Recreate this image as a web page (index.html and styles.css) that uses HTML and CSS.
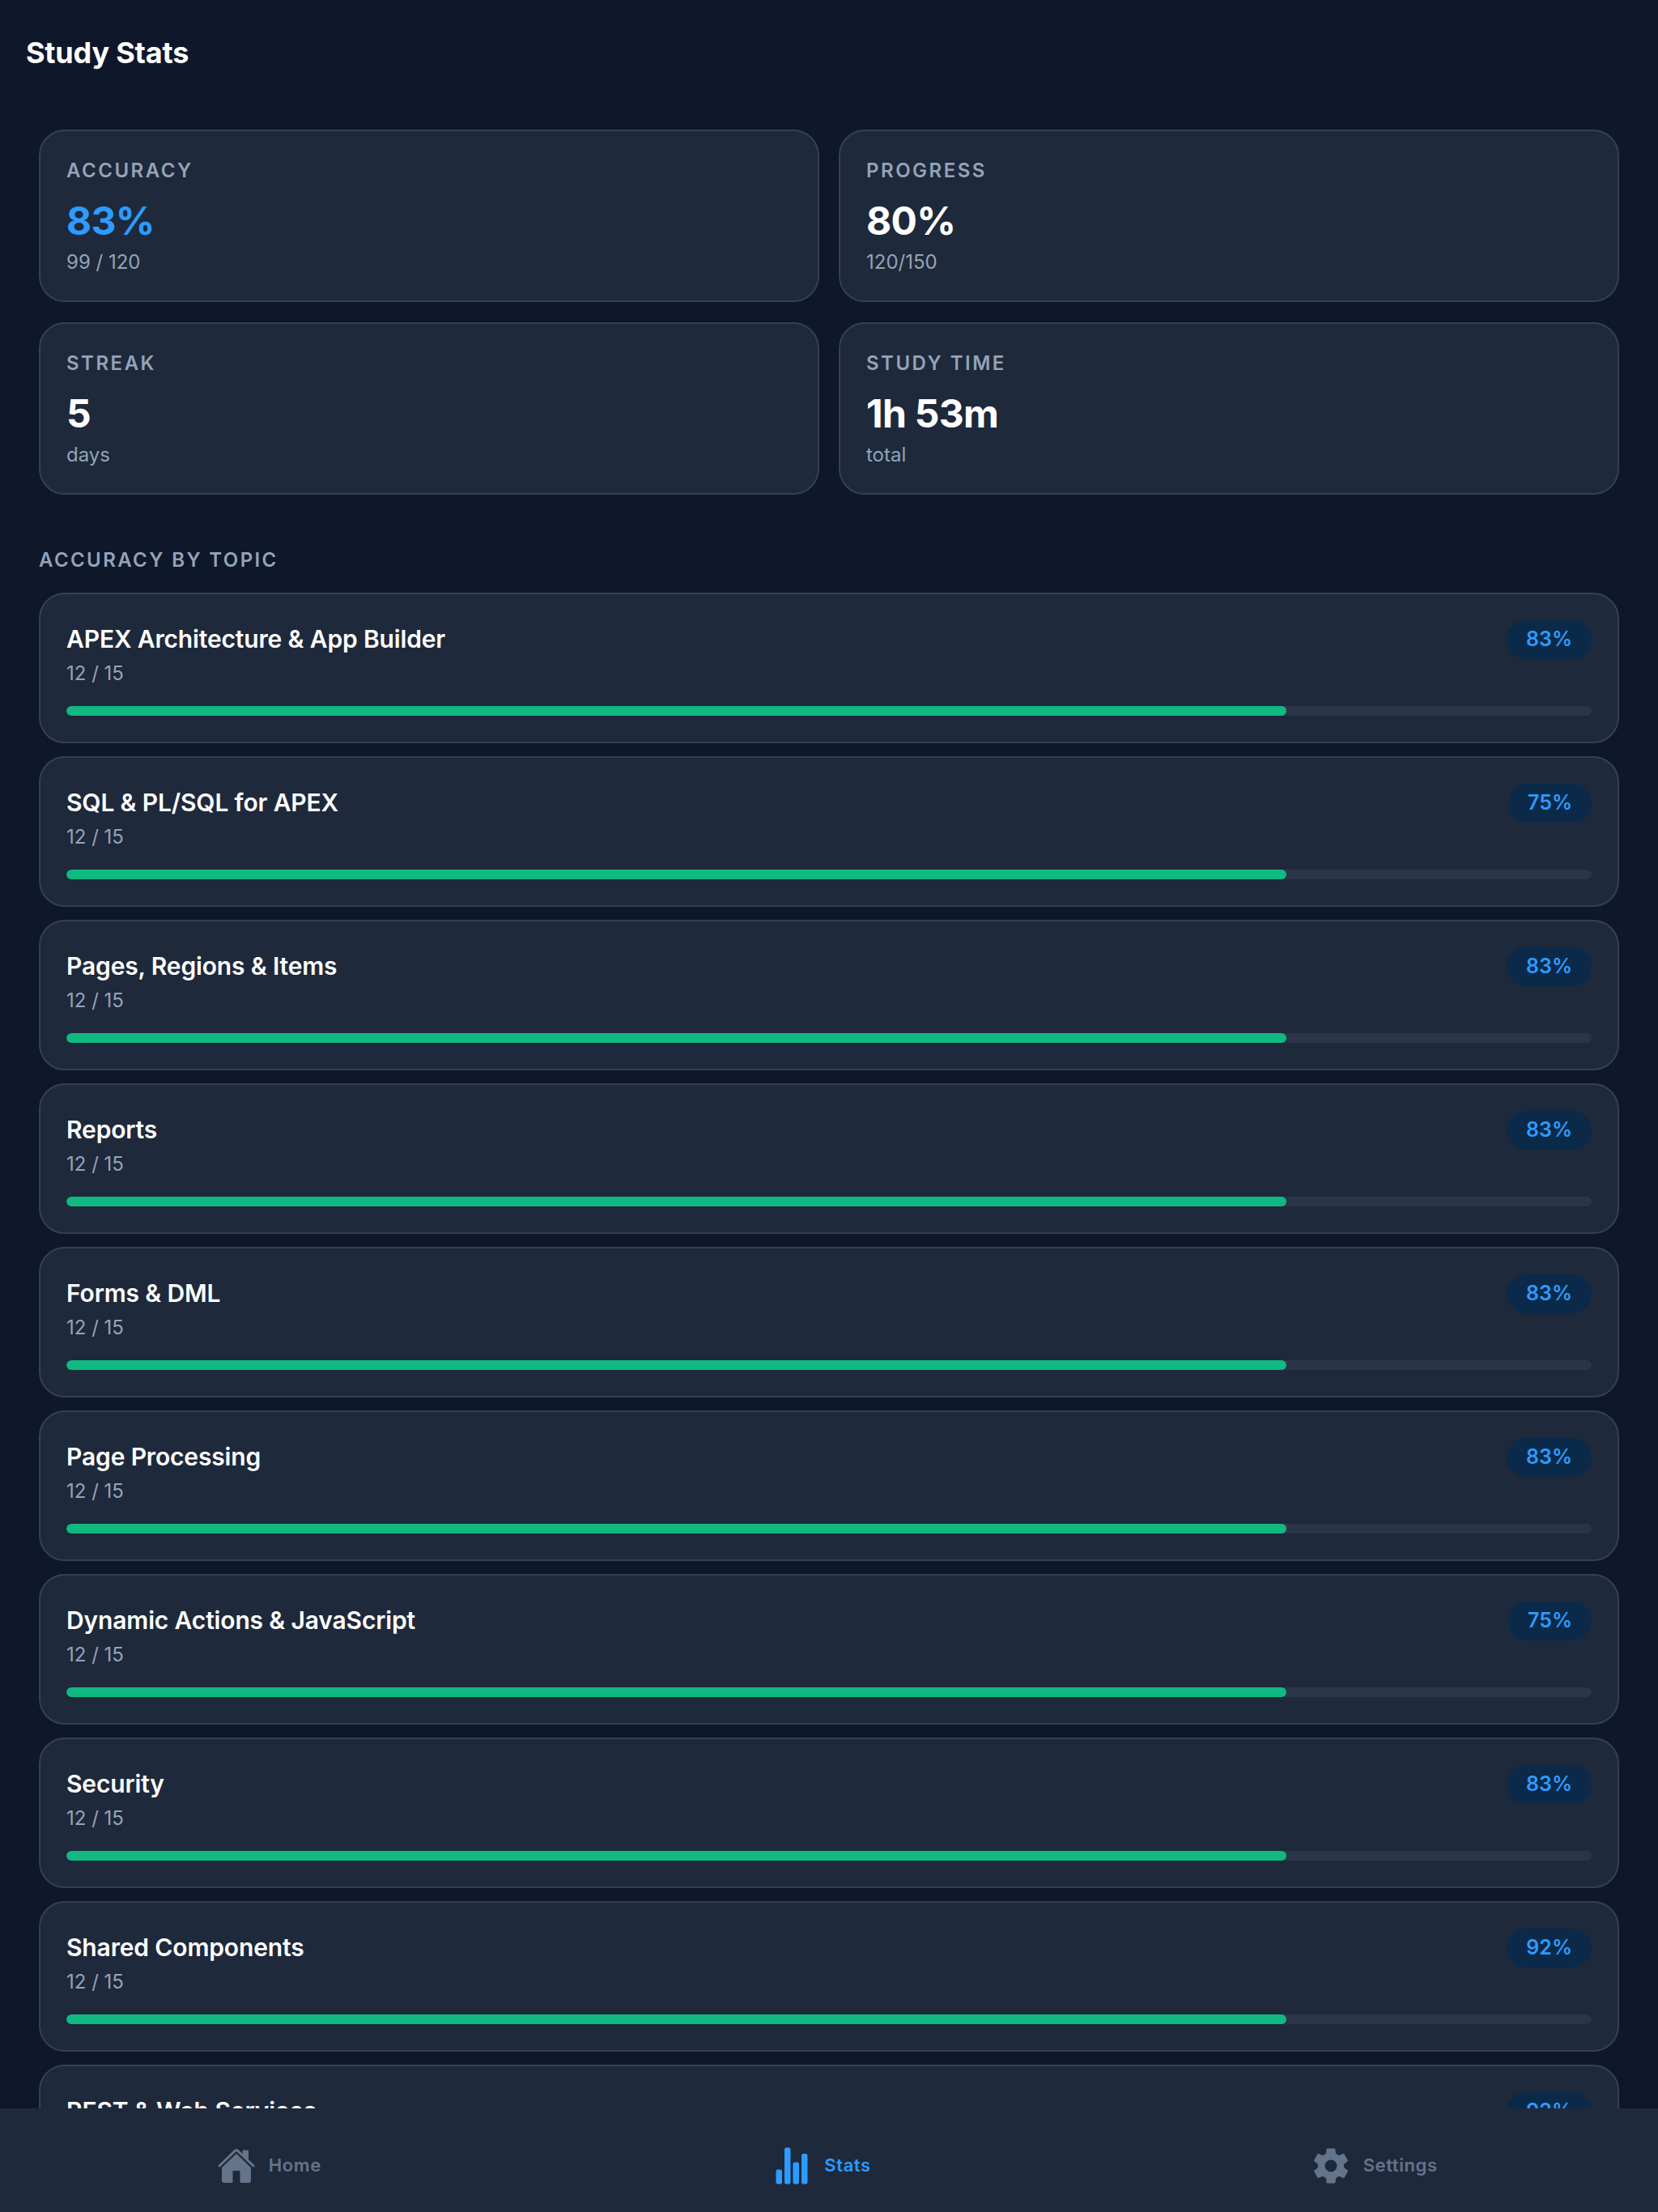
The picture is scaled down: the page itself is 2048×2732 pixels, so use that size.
FILE: index.html
```html
<!DOCTYPE html>
<html lang="en">
<head>
  <meta charset="UTF-8">
  <meta name="viewport" content="width=device-width, initial-scale=1.0">
  <title>Study Stats</title>
  <link rel="stylesheet" href="styles.css">
</head>
<body>
  <div class="app">
    <main class="content">
      <h1 class="page-title">Study Stats</h1>

      <!-- Summary cards -->
      <div class="stats-grid">
        <div class="stat-card">
          <div class="stat-label">ACCURACY</div>
          <div class="stat-value accent">83%</div>
          <div class="stat-sub">99 / 120</div>
        </div>
        <div class="stat-card">
          <div class="stat-label">PROGRESS</div>
          <div class="stat-value">80%</div>
          <div class="stat-sub">120/150</div>
        </div>
        <div class="stat-card">
          <div class="stat-label">STREAK</div>
          <div class="stat-value">5</div>
          <div class="stat-sub">days</div>
        </div>
        <div class="stat-card">
          <div class="stat-label">STUDY TIME</div>
          <div class="stat-value">1h 53m</div>
          <div class="stat-sub">total</div>
        </div>
      </div>

      <h2 class="section-title">ACCURACY BY TOPIC</h2>
      <div class="topic-list">
        <div class="topic-card">
          <div class="topic-head">
            <div>
              <div class="topic-name">APEX Architecture &amp; App Builder</div>
              <div class="topic-count">12 / 15</div>
            </div>
            <span class="topic-badge">83%</span>
          </div>
          <div class="bar"><div class="bar-fill"></div></div>
        </div>
        <div class="topic-card">
          <div class="topic-head">
            <div>
              <div class="topic-name">SQL &amp; PL/SQL for APEX</div>
              <div class="topic-count">12 / 15</div>
            </div>
            <span class="topic-badge">75%</span>
          </div>
          <div class="bar"><div class="bar-fill"></div></div>
        </div>
        <div class="topic-card">
          <div class="topic-head">
            <div>
              <div class="topic-name">Pages, Regions &amp; Items</div>
              <div class="topic-count">12 / 15</div>
            </div>
            <span class="topic-badge">83%</span>
          </div>
          <div class="bar"><div class="bar-fill"></div></div>
        </div>
        <div class="topic-card">
          <div class="topic-head">
            <div>
              <div class="topic-name">Reports</div>
              <div class="topic-count">12 / 15</div>
            </div>
            <span class="topic-badge">83%</span>
          </div>
          <div class="bar"><div class="bar-fill"></div></div>
        </div>
        <div class="topic-card">
          <div class="topic-head">
            <div>
              <div class="topic-name">Forms &amp; DML</div>
              <div class="topic-count">12 / 15</div>
            </div>
            <span class="topic-badge">83%</span>
          </div>
          <div class="bar"><div class="bar-fill"></div></div>
        </div>
        <div class="topic-card">
          <div class="topic-head">
            <div>
              <div class="topic-name">Page Processing</div>
              <div class="topic-count">12 / 15</div>
            </div>
            <span class="topic-badge">83%</span>
          </div>
          <div class="bar"><div class="bar-fill"></div></div>
        </div>
        <div class="topic-card">
          <div class="topic-head">
            <div>
              <div class="topic-name">Dynamic Actions &amp; JavaScript</div>
              <div class="topic-count">12 / 15</div>
            </div>
            <span class="topic-badge">75%</span>
          </div>
          <div class="bar"><div class="bar-fill"></div></div>
        </div>
        <div class="topic-card">
          <div class="topic-head">
            <div>
              <div class="topic-name">Security</div>
              <div class="topic-count">12 / 15</div>
            </div>
            <span class="topic-badge">83%</span>
          </div>
          <div class="bar"><div class="bar-fill"></div></div>
        </div>
        <div class="topic-card">
          <div class="topic-head">
            <div>
              <div class="topic-name">Shared Components</div>
              <div class="topic-count">12 / 15</div>
            </div>
            <span class="topic-badge">92%</span>
          </div>
          <div class="bar"><div class="bar-fill"></div></div>
        </div>
        <div class="topic-card">
          <div class="topic-head">
            <div>
              <div class="topic-name">REST &amp; Web Services</div>
              <div class="topic-count">12 / 15</div>
            </div>
            <span class="topic-badge">92%</span>
          </div>
          <div class="bar"><div class="bar-fill"></div></div>
        </div>
      </div>
    </main>

    <!-- Bottom tabs -->
    <nav class="tab-bar">
      <div class="tab">
        <svg class="tab-icon" viewBox="0 0 512 512"><path d="M261.56 101.28a8 8 0 00-11.06 0L66.4 277.15a8 8 0 00-2.47 5.79L63.9 448a32 32 0 0032 32H192a16 16 0 0016-16V328a8 8 0 018-8h80a8 8 0 018 8v136a16 16 0 0016 16h96.06a32 32 0 0032-32V282.94a8 8 0 00-2.47-5.79z"/><path d="M490.91 244.15l-74.8-71.56V64a16 16 0 00-16-16h-48a16 16 0 00-16 16v32l-57.92-55.38C272.77 35.14 264.71 32 256 32c-8.68 0-16.72 3.14-22.14 8.63l-212.7 203.5c-6.22 6-7 15.87-1.34 22.37A16 16 0 0043 267.56L250.5 69.28a8 8 0 0111.06 0l207.52 198.28a16 16 0 0022.59-.44c6.14-6.36 5.63-16.86-.76-22.97z"/></svg>
        <span class="tab-label">Home</span>
      </div>
      <div class="tab active">
        <svg class="tab-icon" viewBox="0 0 512 512"><path d="M104 496H72a24 24 0 01-24-24V328a24 24 0 0124-24h32a24 24 0 0124 24v144a24 24 0 01-24 24zM328 496h-32a24 24 0 01-24-24V232a24 24 0 0124-24h32a24 24 0 0124 24v240a24 24 0 01-24 24zM440 496h-32a24 24 0 01-24-24V120a24 24 0 0124-24h32a24 24 0 0124 24v352a24 24 0 01-24 24zM216 496h-32a24 24 0 01-24-24V40a24 24 0 0124-24h32a24 24 0 0124 24v432a24 24 0 01-24 24z"/></svg>
        <span class="tab-label">Stats</span>
      </div>
      <div class="tab">
        <svg class="tab-icon" viewBox="0 0 512 512"><path fill-rule="evenodd" d="M256 176a80 80 0 1080 80 80.09 80.09 0 00-80-80zm172.72 80a165.53 165.53 0 01-1.64 22.34l48.69 38.12a11.59 11.59 0 012.63 14.78l-46.06 79.52a11.64 11.64 0 01-14.14 4.93l-57.25-23a176.56 176.56 0 01-38.82 22.67l-8.56 60.75a11.69 11.69 0 01-11.51 9.89h-92.12a12 12 0 01-11.51-9.53l-8.56-60.75A169.3 169.3 0 01151.05 393L93.8 416a11.64 11.64 0 01-14.14-4.92L33.6 331.57a11.59 11.59 0 012.63-14.78l48.69-38.12A174.58 174.58 0 0183.28 256a165.53 165.53 0 011.64-22.34l-48.69-38.12a11.59 11.59 0 01-2.63-14.78l46.06-79.52a11.64 11.64 0 0114.14-4.93l57.25 23a176.56 176.56 0 0138.82-22.67l8.56-60.75A11.69 11.69 0 01209.94 26h92.12a12 12 0 0111.51 9.53l8.56 60.75A169.3 169.3 0 01361 119l57.2-23a11.64 11.64 0 0114.14 4.92l46.06 79.52a11.59 11.59 0 01-2.63 14.78l-48.69 38.12a174.58 174.58 0 011.64 22.66z"/></svg>
        <span class="tab-label">Settings</span>
      </div>
    </nav>
  </div>
</body>
</html>
```
FILE: styles.css
```css
* {
  box-sizing: border-box;
}
body {
  margin: 0;
  background-color: #0f172a;
  color: #fff;
  font-family: Inter, "Noto Sans", sans-serif;
}
.app {
  height: 2732px;
  display: flex;
  flex-direction: column;
  overflow: hidden;
}
.content {
  flex: 1;
  min-height: 0;
  overflow: hidden;
  padding: 0 48px;
}
.page-title {
  margin: 0 0 0 -16px;
  height: 160px;
  padding-top: 42px;
  font-size: 36px;
  line-height: 46px;
  font-weight: 700;
  letter-spacing: -0.2px;
}
.stats-grid {
  display: grid;
  grid-template-columns: 1fr 1fr;
  gap: 25px 24px;
}
.stat-card {
  background-color: #1e293b;
  border: 2px solid #334155;
  border-radius: 32px;
  padding: 32px;
}
.stat-label {
  margin-top: 2px;
  font-size: 24px;
  line-height: 30px;
  font-weight: 600;
  letter-spacing: 2.5px;
  color: #94a3b8;
}
.stat-value {
  margin-top: 14px;
  font-size: 48px;
  line-height: 66px;
  font-weight: 700;
  letter-spacing: -0.7px;
}
.stat-value.accent {
  color: #2d9bff;
}
.stat-sub {
  margin-top: 3px;
  font-size: 24px;
  line-height: 30px;
  color: #94a3b8;
}
.section-title {
  margin: 66px 0 25px;
  font-size: 24px;
  line-height: 30px;
  font-weight: 600;
  letter-spacing: 2.4px;
  color: #94a3b8;
}
.topic-list {
  display: flex;
  flex-direction: column;
  gap: 16px;
}
.topic-card {
  background-color: #1e293b;
  border: 2px solid #334155;
  border-radius: 32px;
  padding: 32px;
}
.topic-head {
  display: flex;
  justify-content: space-between;
  align-items: flex-start;
}
.topic-name {
  font-size: 30px;
  line-height: 47px;
  font-weight: 600;
  letter-spacing: -0.15px;
}
.topic-count {
  margin-top: 3px;
  font-size: 24px;
  line-height: 32px;
  color: #94a3b8;
}
.topic-badge {
  padding: 0 24px;
  height: 48px;
  line-height: 47px;
  border-radius: 24px;
  background-color: #0b2a4a;
  color: #2d9bff;
  font-size: 25px;
  font-weight: 600;
}
.bar {
  margin-top: 24px;
  height: 12px;
  border-radius: 6px;
  background-color: #2a3648;
  overflow: hidden;
}
.bar-fill {
  width: 80%;
  height: 100%;
  border-radius: 6px;
  background-color: #10b981;
}
.tab-bar {
  flex: none;
  height: 128px;
  padding-top: 14px;
  background-color: #1e293b;
  display: grid;
  grid-template-columns: repeat(3, 1fr);
}
.tab {
  display: flex;
  align-items: center;
  justify-content: center;
  gap: 16px;
  padding-right: 18px;
  color: #64748b;
}
.tab.active {
  color: #2d9bff;
}
.tab-icon {
  width: 48px;
  height: 48px;
  fill: currentColor;
}
.tab-label {
  margin-bottom: 3px;
  font-size: 22px;
  font-weight: 600;
  letter-spacing: 0.6px;
}
```
